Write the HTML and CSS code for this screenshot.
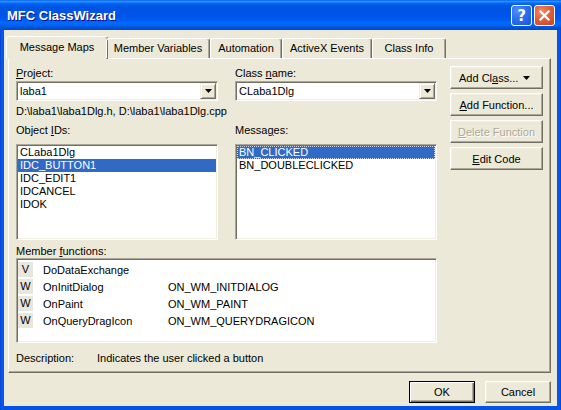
FILE: index.html
```html
<!DOCTYPE html>
<html>
<head>
<meta charset="utf-8">
<link rel="stylesheet" href="styles.css">
</head>
<body>
<div class="window">
  <div class="titlebar">
    <span class="title">MFC ClassWizard</span>
    <div class="tb-buttons">
      <div class="tb-btn help">?</div>
      <div class="tb-btn close"><svg width="19" height="19" viewBox="0 0 19 19"><path d="M5.5 5.5L13.5 13.5M13.5 5.5L5.5 13.5" stroke="#fff" stroke-width="2.2" stroke-linecap="square"/></svg></div>
    </div>
  </div>
  <div class="client">
    <div class="tabs">
      <div class="tab tab-maps sel">Message Maps</div>
      <div class="tab tab-vars">Member Variables</div>
      <div class="tab tab-auto">Automation</div>
      <div class="tab tab-activex">ActiveX Events</div>
      <div class="tab tab-info">Class Info</div>
    </div>
    <div class="panel">
      <div class="main">
        <div class="row2">
          <div class="col">
            <div class="label"><u>P</u>roject:</div>
            <div class="combo"><span class="combo-text">laba1</span><span class="dd"><svg width="7" height="4" viewBox="0 0 7 4"><path d="M0 0H7L3.5 4Z" fill="#000"/></svg></span></div>
          </div>
          <div class="col">
            <div class="label">Class <u>n</u>ame:</div>
            <div class="combo"><span class="combo-text">CLaba1Dlg</span><span class="dd"><svg width="7" height="4" viewBox="0 0 7 4"><path d="M0 0H7L3.5 4Z" fill="#000"/></svg></span></div>
          </div>
        </div>
        <div class="path">D:\laba1\laba1Dlg.h, D:\laba1\laba1Dlg.cpp</div>
        <div class="row2 lists">
          <div class="col">
            <div class="label">Object <u>I</u>Ds:</div>
            <div class="list">
              <div class="item">CLaba1Dlg</div>
              <div class="item sel">IDC_BUTTON1</div>
              <div class="item">IDC_EDIT1</div>
              <div class="item">IDCANCEL</div>
              <div class="item">IDOK</div>
            </div>
          </div>
          <div class="col">
            <div class="label">Messa<u>g</u>es:</div>
            <div class="list">
              <div class="item sel focus">BN_CLICKED</div>
              <div class="item">BN_DOUBLECLICKED</div>
            </div>
          </div>
        </div>
        <div class="label members-label">Member <u>f</u>unctions:</div>
        <div class="list members">
          <div class="mrow"><span class="mtype">V</span><span class="mname">DoDataExchange</span><span class="mmsg"></span></div>
          <div class="mrow"><span class="mtype">W</span><span class="mname">OnInitDialog</span><span class="mmsg">ON_WM_INITDIALOG</span></div>
          <div class="mrow"><span class="mtype">W</span><span class="mname">OnPaint</span><span class="mmsg">ON_WM_PAINT</span></div>
          <div class="mrow"><span class="mtype">W</span><span class="mname">OnQueryDragIcon</span><span class="mmsg">ON_WM_QUERYDRAGICON</span></div>
        </div>
        <div class="desc"><span class="desc-label">Description:</span><span>Indicates the user clicked a button</span></div>
      </div>
      <div class="buttons">
        <div class="btn btn-split"><span>Add Cl<u>a</u>ss...</span><svg width="7" height="4" viewBox="0 0 7 4"><path d="M0 0H7L3.5 4Z" fill="#000"/></svg></div>
        <div class="btn"><span><u>A</u>dd Function...</span></div>
        <div class="btn disabled"><span><u>D</u>elete Function</span></div>
        <div class="btn"><span><u>E</u>dit Code</span></div>
      </div>
    </div>
    <div class="footer">
      <div class="btn default">OK</div>
      <div class="btn">Cancel</div>
    </div>
  </div>
</div>
</body>
</html>
```
FILE: styles.css
```css
* { box-sizing: border-box; }
html, body { margin: 0; padding: 0; background: #fff; }
body {
  font-family: "Liberation Sans", Arial, sans-serif;
  font-size: 11px;
  color: #000;
}
u { text-decoration: underline; text-underline-offset: 1px; }

.window {
  width: 561px;
  height: 410px;
  display: flex;
  flex-direction: column;
  background: linear-gradient(to right, #0842d4 0px, #0a5bf0 2px, #0651e6 4px, #0651e6 557px, #0a5bf0 559px, #0842d4 561px);
}

.titlebar {
  height: 30px;
  flex: none;
  display: flex;
  align-items: center;
  justify-content: space-between;
  padding: 0 6px 0 7px;
  background: linear-gradient(to bottom, #0058ee 0%, #3593ff 4%, #288eff 6%, #127dff 8%, #036ffc 10%, #0262ee 14%, #0057e5 20%, #0054e3 24%, #0055eb 56%, #005bf5 66%, #026afe 76%, #0062ef 86%, #0052d6 92%, #0346d0 100%);
}
.title {
  color: #fff;
  font-weight: bold;
  font-size: 13px;
  text-shadow: 1px 1px #0f1089;
  margin-top: 1px;
}
.tb-buttons { display: flex; gap: 2px; margin-top: 1px; }
.tb-btn {
  width: 21px;
  height: 21px;
  border: 1px solid #fff;
  border-radius: 3px;
  display: flex;
  align-items: center;
  justify-content: center;
}
.help {
  background: radial-gradient(circle at 30% 25%, #4f8ef8 0%, #2c6ff0 45%, #1a55dc 100%);
  color: #fff;
  font-weight: bold;
  font-size: 15px;
  font-family: "DejaVu Sans", sans-serif;
}
.close {
  background: radial-gradient(circle at 35% 30%, #f08a6a 0%, #e2603c 45%, #c9401c 100%);
}

.client {
  flex: 1;
  margin: 0 4px 4px;
  background: #ece9d8;
  padding: 6px 6px 0 4px;
  display: flex;
  flex-direction: column;
}

.tabs {
  display: flex;
  align-items: flex-end;
  height: 22px;
  position: relative;
  z-index: 1;
  flex: none;
}
.tab {
  height: 20px;
  border: 1px solid;
  border-bottom: none;
  border-color: #fff #716f64 transparent #fff;
  box-shadow: inset -1px 0 #aca899;
  border-radius: 3px 3px 0 0;
  text-align: center;
  line-height: 18px;
  white-space: nowrap;
}
.tab-maps { width: 98px; }
.tab-vars { width: 104px; }
.tab-auto { width: 72px; }
.tab-activex { width: 90px; }
.tab-info { width: 74px; }
.tab.sel {
  width: 102px;
  height: 23px;
  margin: 0 -2px -1px;
  background: #ece9d8;
  line-height: 20px;
}

.panel {
  height: 315px;
  flex: none;
  border: 1px solid;
  border-color: #fff #716f64 #716f64 #fff;
  box-shadow: inset -1px -1px #aca899;
  display: flex;
  padding: 0 0 0 7px;
}

.main {
  width: 421px;
  padding-top: 8px;
}
.row2 { display: flex; gap: 17px; }
.col { width: 202px; }
.label { height: 13px; line-height: 13px; white-space: nowrap; }

.combo, .list {
  border: 1px solid;
  border-color: #aca899 #fff #fff #aca899;
  box-shadow: inset 1px 1px #716f64, inset -1px -1px #f1efe2;
  padding: 1px;
  background: #fff;
}
.combo {
  height: 20px;
  margin-top: 1px;
  display: flex;
  align-items: center;
}
.combo-text { flex: 1; padding-left: 2px; white-space: nowrap; }
.dd {
  width: 16px;
  height: 16px;
  background: #ece9d8;
  border: 1px solid;
  border-color: #f1efe2 #716f64 #716f64 #f1efe2;
  box-shadow: inset 1px 1px #fff, inset -1px -1px #aca899;
  display: flex;
  align-items: center;
  justify-content: center;
}
.dd svg { display: block; }

.path { height: 13px; line-height: 13px; white-space: nowrap; margin-top: 4px; }

.lists { margin-top: 6px; }
.lists .list { margin-top: 7px; height: 96px; }
.item {
  height: 13px;
  line-height: 13px;
  padding-left: 2px;
  white-space: nowrap;
}
.item.sel { background: #316ac5; color: #fff; }
.item.focus { outline: 1px dotted #c9d5ee; outline-offset: -1px; }

.members-label { margin-top: 5px; }
.members { height: 85px; padding-top: 2px; }
.mrow { display: flex; align-items: center; height: 17px; white-space: nowrap; }
.mtype {
  width: 15px;
  height: 15px;
  background: #e8e7df;
  text-align: center;
  line-height: 15px;
}
.mname { margin-left: 10px; width: 125px; }

.desc { display: flex; margin-top: 9px; height: 13px; line-height: 13px; white-space: nowrap; }
.desc-label { width: 81px; }

.buttons {
  width: 93px;
  margin-left: 13px;
  padding-top: 7px;
  display: flex;
  flex-direction: column;
  gap: 4px;
}
.btn {
  height: 23px;
  background: #ece9d8;
  border: 1px solid;
  border-color: #fff #716f64 #716f64 #fff;
  box-shadow: inset -1px -1px #aca899, inset 1px 1px #f1efe2;
  display: flex;
  align-items: center;
  justify-content: center;
  white-space: nowrap;
}
.btn-split { justify-content: space-between; padding: 0 12px 0 8px; }
.btn-split svg { display: block; }
.btn.disabled { color: #aca899; text-shadow: 1px 1px #fff; }

.footer {
  display: flex;
  justify-content: flex-end;
  gap: 10px;
  margin-top: 8px;
}
.footer .btn { width: 66px; height: 22px; }
.btn.default {
  border-color: #000;
  box-shadow: inset 1px 1px #fff, inset -1px -1px #716f64, inset -2px -2px #aca899;
}
```
